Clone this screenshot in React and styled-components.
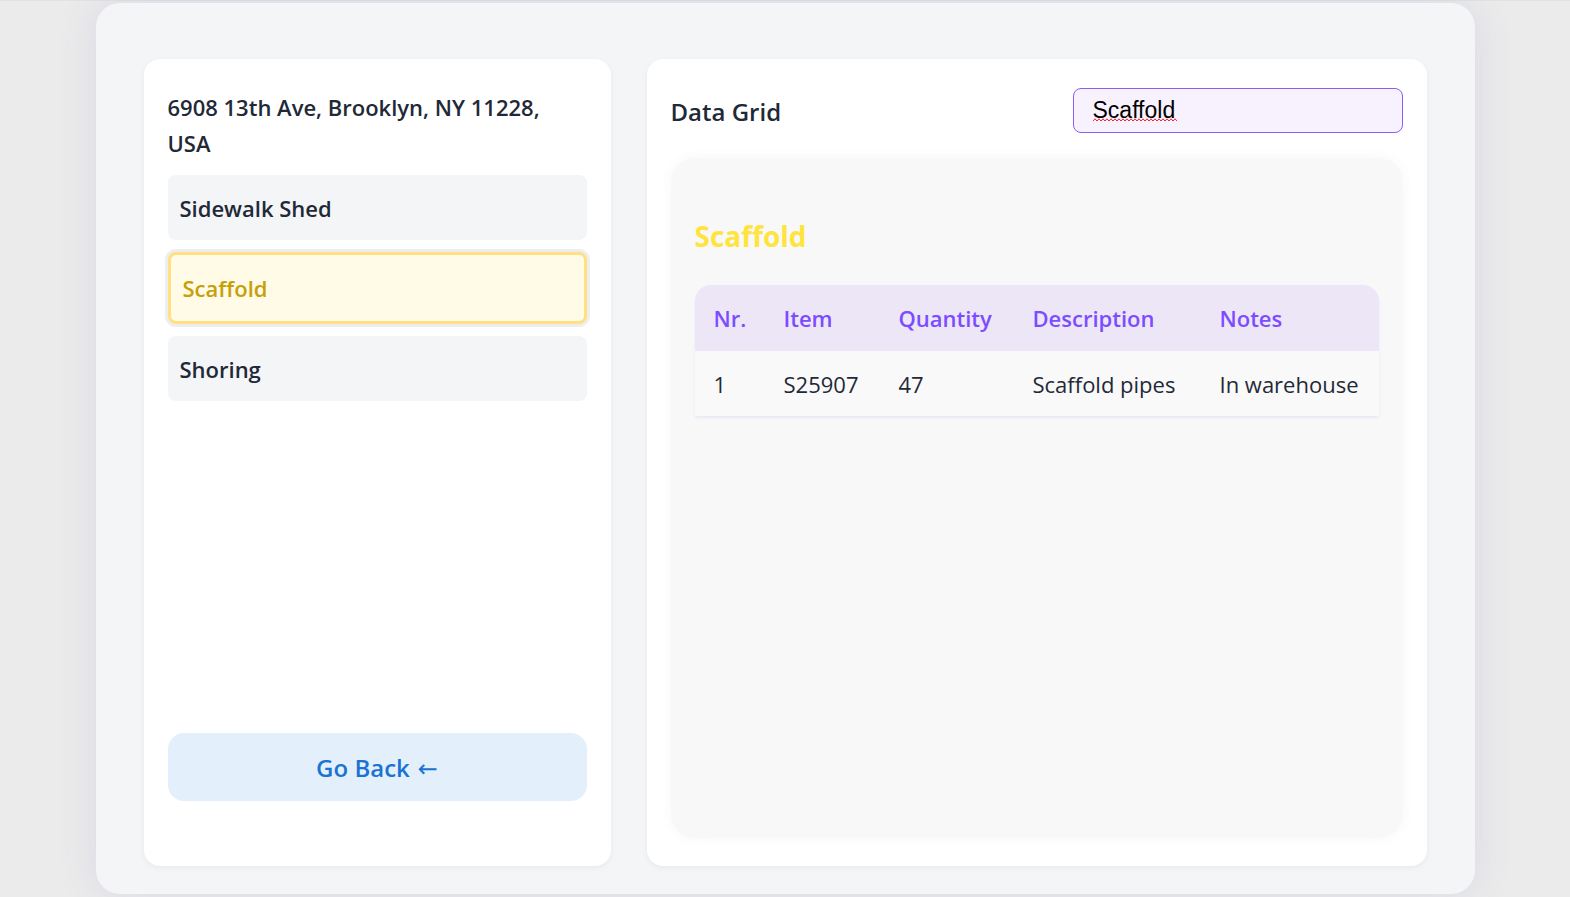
import React, { useState } from "react";
import styled, { createGlobalStyle } from "styled-components";

const Global = createGlobalStyle`
  html, body { margin: 0; padding: 0; }
  body {
    background: #ebebeb;
    font-family: "Open Sans", "Noto Sans", sans-serif;
    color: #1f2937;
  }
  * { box-sizing: border-box; }
`;

const Page = styled.div`
  min-height: 897px;
  padding: 2px 0 3px;
  border-top: 1px solid #e2e2e2;
  border-bottom: 1px solid #e2e2e2;
`;

const Shell = styled.div`
  width: 1379px;
  height: 891px;
  margin: 0 auto;
  background: #f4f5f7;
  border-radius: 24px;
  box-shadow: 0 0 40px rgba(110, 80, 190, 0.12);
  padding: 56px 48px 28px;
  display: grid;
  grid-template-columns: 467px 780px;
  column-gap: 36px;
`;

const Panel = styled.section`
  background: #ffffff;
  border-radius: 16px;
  box-shadow: 0 2px 6px rgba(0, 0, 0, 0.05);
  height: 807px;
  display: flex;
  flex-direction: column;
`;

const LeftPanel = styled(Panel)`
  padding: 30px 24px 65px;
`;

const Address = styled.h2`
  margin: 0 0 14px;
  font-size: 22px;
  line-height: 36px;
  font-weight: 600;
  color: #1f2937;
`;

const List = styled.div`
  display: flex;
  flex-direction: column;
  gap: 12px;
`;

const Item = styled.button`
  all: unset;
  box-sizing: border-box;
  cursor: pointer;
  display: flex;
  align-items: center;
  height: ${(p) => (p.$active ? "72px" : "65px")};
  padding: 0 12px;
  border-radius: 8px;
  font-family: "Open Sans", "Noto Sans", sans-serif;
  font-size: 22px;
  font-weight: 600;
  background: ${(p) => (p.$active ? "#fffbe6" : "#f4f5f7")};
  color: ${(p) => (p.$active ? "#c6a00a" : "#1f2937")};
  border: ${(p) => (p.$active ? "3px solid #ffe082" : "none")};
  box-shadow: ${(p) => (p.$active ? "0 0 0 3px #eeeeee" : "none")};
`;

const BackButton = styled.button`
  all: unset;
  box-sizing: border-box;
  cursor: pointer;
  margin-top: auto;
  height: 68px;
  border-radius: 16px;
  background: #e3f0fc;
  color: #1a73d1;
  font-family: "Open Sans", "Noto Sans", sans-serif;
  font-size: 24px;
  font-weight: 600;
  display: flex;
  align-items: center;
  justify-content: center;
  gap: 8px;
`;

const Arrow = styled.span`
  font-family: "DejaVu Sans", sans-serif;
  font-weight: 400;
  font-size: 24px;
  line-height: 1;
  transform: translateY(2px);
`;

const RightPanel = styled(Panel)`
  padding: 29px 24px 28px;
`;

const Header = styled.div`
  display: flex;
  align-items: center;
  justify-content: space-between;
  height: 45px;
  margin-bottom: 25px;
`;

const Title = styled.h2`
  margin: 0;
  font-size: 24px;
  font-weight: 600;
  color: #1f2937;
  transform: translateY(1px);
`;

const SearchWrap = styled.div`
  position: relative;
  width: 330px;
  height: 45px;
`;

const Search = styled.input`
  width: 100%;
  height: 100%;
  border: 1px solid #8b5cf6;
  border-radius: 8px;
  background: #f8f2fe;
  padding: 0 19px;
  font-family: "Liberation Sans", Arial, sans-serif;
  font-size: 23px;
  color: #000;
  outline: none;
`;

const Squiggle = styled.svg`
  position: absolute;
  left: 20px;
  top: 30px;
  pointer-events: none;
`;

const Card = styled.div`
  flex: 1;
  background: #f8f8f9;
  border-radius: 24px;
  box-shadow: 0 0 12px rgba(120, 100, 200, 0.06);
  padding: 24px;
`;

const CardTitle = styled.h3`
  margin: 36px 0 31px;
  font-size: 28px;
  line-height: 36px;
  font-weight: 700;
  color: #ffe43f;
`;

const Table = styled.table`
  width: 100%;
  border-collapse: separate;
  border-spacing: 0;
  table-layout: fixed;
  box-shadow: 0 2px 3px rgba(120, 90, 200, 0.1);
  border-radius: 16px 16px 0 0;
`;

const Th = styled.th`
  text-align: left;
  height: 66px;
  padding: 0 0 0 19px;
  background: #ede6f6;
  color: #7c4dff;
  font-size: 22px;
  font-weight: 600;
  &:first-child { border-top-left-radius: 16px; }
  &:last-child { border-top-right-radius: 16px; }
`;

const Td = styled.td`
  height: 65px;
  padding: 0 0 0 19px;
  background: #f9f9f9;
  font-size: 22px;
  font-weight: 400;
  color: #1f2937;
  white-space: nowrap;
`;

const columns = [
  { key: "nr", label: "Nr.", width: 70 },
  { key: "item", label: "Item", width: 115 },
  { key: "qty", label: "Quantity", width: 134 },
  { key: "desc", label: "Description", width: 187 },
  { key: "notes", label: "Notes", width: 178 },
];

const rows = [
  { nr: "1", item: "S25907", qty: "47", desc: "Scaffold pipes", notes: "In warehouse" },
];

function wavePath(width) {
  let d = "M0 3";
  for (let x = 0; x < width; x += 4) {
    d += ` L${x + 2} 0.8 L${x + 4} 3`;
  }
  return d;
}

export default function App() {
  const [active, setActive] = useState("Scaffold");
  const [query, setQuery] = useState("Scaffold");
  const items = ["Sidewalk Shed", "Scaffold", "Shoring"];
  return (
    <>
      <Global />
      <Page>
        <Shell>
          <LeftPanel>
            <Address>6908 13th Ave, Brooklyn, NY 11228, USA</Address>
            <List>
              {items.map((it) => (
                <Item key={it} $active={active === it} onClick={() => setActive(it)}>
                  {it}
                </Item>
              ))}
            </List>
            <BackButton>
              Go Back <Arrow>←</Arrow>
            </BackButton>
          </LeftPanel>
          <RightPanel>
            <Header>
              <Title>Data Grid</Title>
              <SearchWrap>
                <Search
                  value={query}
                  spellCheck={false}
                  onChange={(e) => setQuery(e.target.value)}
                />
                {query === "Scaffold" && (
                  <Squiggle width="84" height="4" viewBox="0 0 84 4">
                    <path d={wavePath(84)} fill="none" stroke="#e8262a" strokeWidth="1" />
                  </Squiggle>
                )}
              </SearchWrap>
            </Header>
            <Card>
              <CardTitle>{active}</CardTitle>
              <Table>
                <colgroup>
                  {columns.map((c) => (
                    <col key={c.key} style={{ width: c.width }} />
                  ))}
                </colgroup>
                <thead>
                  <tr>
                    {columns.map((c) => (
                      <Th key={c.key}>{c.label}</Th>
                    ))}
                  </tr>
                </thead>
                <tbody>
                  {rows.map((r, i) => (
                    <tr key={i}>
                      {columns.map((c) => (
                        <Td key={c.key}>{r[c.key]}</Td>
                      ))}
                    </tr>
                  ))}
                </tbody>
              </Table>
            </Card>
          </RightPanel>
        </Shell>
      </Page>
    </>
  );
}
